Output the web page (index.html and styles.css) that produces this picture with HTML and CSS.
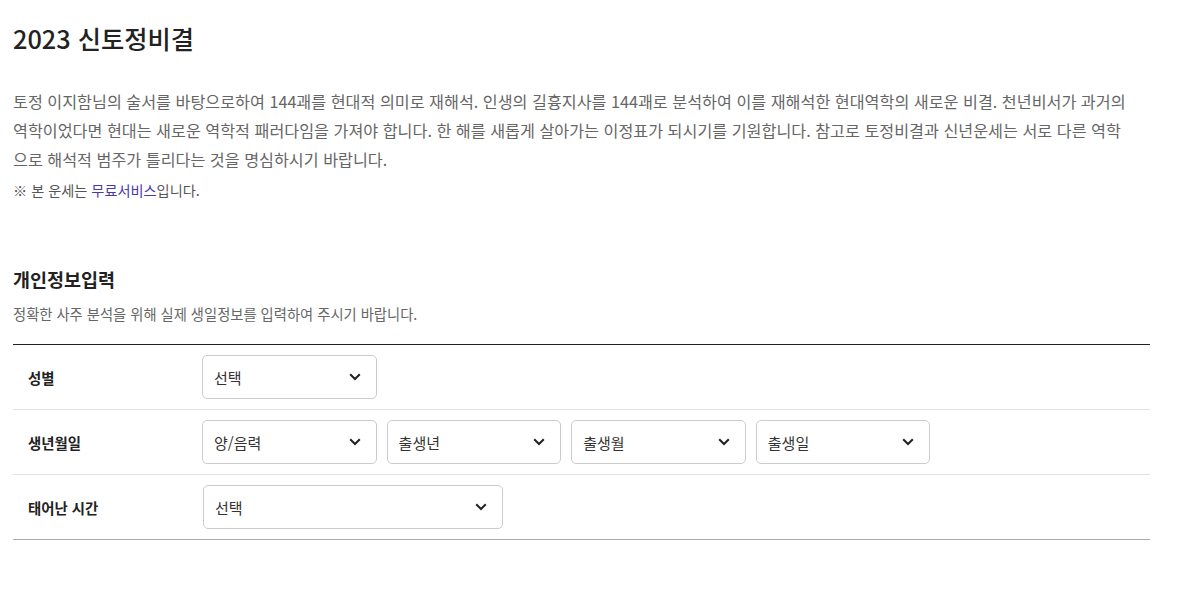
FILE: index.html
```html
<!DOCTYPE html>
<html lang="ko">
<head>
<meta charset="utf-8">
<link rel="stylesheet" href="styles.css">
</head>
<body>
<div class="page">
  <h1 class="title">2023 신토정비결</h1>
  <p class="desc">토정 이지함님의 술서를 바탕으로하여 144괘를 현대적 의미로 재해석. 인생의 길흉지사를 144괘로 분석하여 이를 재해석한 현대역학의 새로운 비결. 천년비서가 과거의 역학이었다면 현대는 새로운 역학적 패러다임을 가져야 합니다. 한 해를 새롭게 살아가는 이정표가 되시기를 기원합니다. 참고로 토정비결과 신년운세는 서로 다른 역학으로 해석적 범주가 틀리다는 것을 명심하시기 바랍니다.</p>
  <p class="note">※ 본 운세는 <span class="free">무료서비스</span>입니다.</p>

  <h2 class="section-title">개인정보입력</h2>
  <p class="section-sub">정확한 사주 분석을 위해 실제 생일정보를 입력하여 주시기 바랍니다.</p>

  <div class="form">
    <div class="row">
      <div class="label">성별</div>
      <div class="fields">
        <div class="select"><span>선택</span><svg class="chev" viewBox="0 0 12 8" width="12" height="8"><path d="M1.2 1.2 6 6 10.8 1.2" fill="none" stroke="#222" stroke-width="2"/></svg></div>
      </div>
    </div>
    <div class="row">
      <div class="label">생년월일</div>
      <div class="fields">
        <div class="select"><span>양/음력</span><svg class="chev" viewBox="0 0 12 8" width="12" height="8"><path d="M1.2 1.2 6 6 10.8 1.2" fill="none" stroke="#222" stroke-width="2"/></svg></div>
        <div class="select"><span>출생년</span><svg class="chev" viewBox="0 0 12 8" width="12" height="8"><path d="M1.2 1.2 6 6 10.8 1.2" fill="none" stroke="#222" stroke-width="2"/></svg></div>
        <div class="select"><span>출생월</span><svg class="chev" viewBox="0 0 12 8" width="12" height="8"><path d="M1.2 1.2 6 6 10.8 1.2" fill="none" stroke="#222" stroke-width="2"/></svg></div>
        <div class="select"><span>출생일</span><svg class="chev" viewBox="0 0 12 8" width="12" height="8"><path d="M1.2 1.2 6 6 10.8 1.2" fill="none" stroke="#222" stroke-width="2"/></svg></div>
      </div>
    </div>
    <div class="row">
      <div class="label">태어난 시간</div>
      <div class="fields">
        <div class="select select-wide"><span>선택</span><svg class="chev" viewBox="0 0 12 8" width="12" height="8"><path d="M1.2 1.2 6 6 10.8 1.2" fill="none" stroke="#222" stroke-width="2"/></svg></div>
      </div>
    </div>
  </div>
</div>
</body>
</html>
```

FILE: styles.css
```css
* { box-sizing: border-box; }
html, body { margin: 0; padding: 0; background: #fff; }
body {
  font-family: "Noto Sans CJK KR", "Noto Sans", sans-serif;
  color: #222;
}
.page {
  width: 1137px;
  margin-left: 13px;
  padding-top: 20px;
}
.title {
  margin: 0;
  font-size: 25.3px;
  font-weight: 500;
  line-height: 36px;
  color: #222;
  letter-spacing: 0;
}
.desc {
  width: 1122px;
  margin: 31px 0 0;
  font-size: 16.2px;
  line-height: 29px;
  color: #666;
  letter-spacing: 0;
}
.note {
  margin: 6px 0 0;
  font-size: 14.2px;
  line-height: 20px;
  color: #555;
  letter-spacing: 0;
}
.free { color: #4a37a8; }
.section-title {
  margin: 66px 0 0;
  font-size: 18.5px;
  font-weight: 700;
  line-height: 26px;
  color: #222;
}
.section-sub {
  margin: 12px 0 0;
  font-size: 14.3px;
  line-height: 20px;
  color: #666;
}
.form {
  margin-top: 20px;
  border-top: 1px solid #222;
  border-bottom: 1px solid #aaa;
}
.row {
  display: flex;
  align-items: center;
  height: 65px;
  border-top: 1px solid #e2e2e2;
}
.row:first-child { border-top: none; height: 64px; }
.label {
  width: 189px;
  padding-left: 15px;
  font-size: 14.4px;
  font-weight: 700;
  color: #222;
}
.fields {
  display: flex;
  gap: 10px;
}
.select {
  width: 174.6px;
  height: 44px;
  border: 1px solid #ccc;
  border-radius: 5px;
  display: flex;
  align-items: center;
  justify-content: space-between;
  padding: 0 15px 0 11px;
  font-size: 15px;
  color: #333;
}
.select-wide { width: 300px; margin-left: 1px; }
.chev { display: block; }
```
